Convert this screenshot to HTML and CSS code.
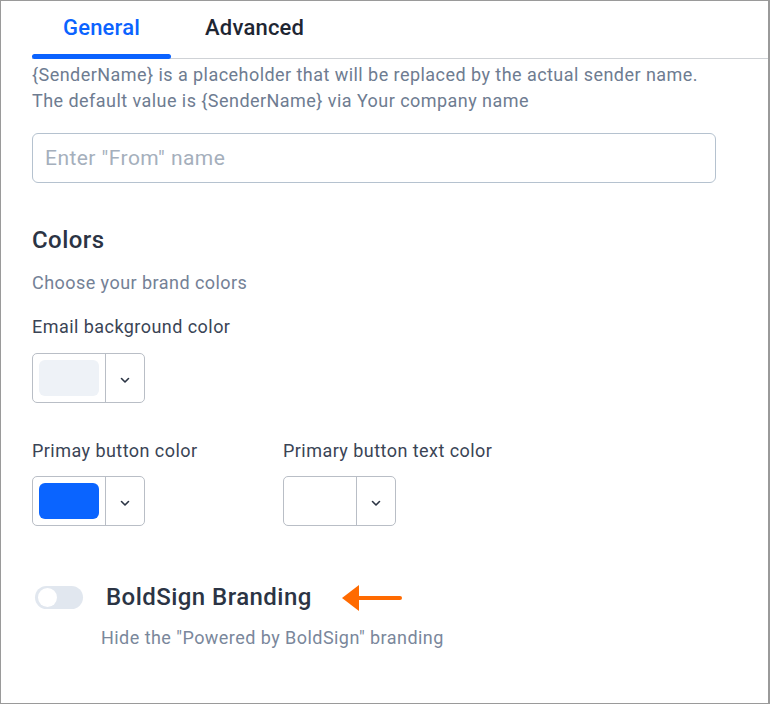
FILE: index.html
```html
<!DOCTYPE html>
<html>
<head>
<meta charset="utf-8">
<link rel="stylesheet" href="styles.css">
</head>
<body>
<div class="frame">
  <div class="tabs">
    <div class="tab active">General</div>
    <div class="tab">Advanced</div>
  </div>
  <div class="content">
    <p class="hint">{SenderName} is a placeholder that will be replaced by the actual sender name.<br>The default value is {SenderName} via Your company name</p>
    <input class="text-input" type="text" placeholder="Enter &quot;From&quot; name">

    <h2 class="section-title">Colors</h2>
    <p class="sub">Choose your brand colors</p>

    <div class="field">
      <label class="label">Email background color</label>
      <div class="picker">
        <div class="swatch-wrap"><div class="swatch swatch-light"></div></div>
        <div class="drop"><svg width="12" height="8" viewBox="0 0 12 8"><path d="M2.5 2.5 L6 6 L9.5 2.5" fill="none" stroke="#2b3444" stroke-width="1.6" stroke-linecap="round" stroke-linejoin="round"/></svg></div>
      </div>
    </div>

    <div class="row">
      <div class="field col">
        <label class="label">Primay button color</label>
        <div class="picker">
          <div class="swatch-wrap"><div class="swatch swatch-blue"></div></div>
          <div class="drop"><svg width="12" height="8" viewBox="0 0 12 8"><path d="M2.5 2.5 L6 6 L9.5 2.5" fill="none" stroke="#2b3444" stroke-width="1.6" stroke-linecap="round" stroke-linejoin="round"/></svg></div>
        </div>
      </div>
      <div class="field col">
        <label class="label">Primary button text color</label>
        <div class="picker">
          <div class="swatch-wrap"><div class="swatch swatch-white"></div></div>
          <div class="drop"><svg width="12" height="8" viewBox="0 0 12 8"><path d="M2.5 2.5 L6 6 L9.5 2.5" fill="none" stroke="#2b3444" stroke-width="1.6" stroke-linecap="round" stroke-linejoin="round"/></svg></div>
        </div>
      </div>
    </div>

    <div class="branding">
      <div class="toggle"><div class="knob"></div></div>
      <span class="branding-title">BoldSign Branding</span>
      <svg class="arrow" width="62" height="32" viewBox="0 0 62 32"><path d="M14 16 H59" stroke="#ff6a00" stroke-width="4" stroke-linecap="round"/><path d="M1 16 L18 3 L18 29 Z" fill="#ff6a00"/></svg>
    </div>
    <p class="branding-desc">Hide the "Powered by BoldSign" branding</p>
  </div>
</div>
</body>
</html>
```

FILE: styles.css
```css
* { box-sizing: border-box; }
html, body { margin: 0; padding: 0; background: #fff; }
body { font-family: Roboto, "Liberation Sans", sans-serif; }

.frame {
  width: 770px;
  height: 704px;
  border: 1px solid #9a9a9a;
  border-right-width: 2px;
  overflow: hidden;
}

.tabs {
  display: flex;
  margin-left: 31px;
  height: 58px;
  border-bottom: 1px solid #cfd2d6;
}
.tab {
  position: relative;
  padding: 14px 31px 0 31px;
  font-size: 22px;
  font-weight: 500;
  color: #1e2633;
  letter-spacing: 0.2px;
}
.tab + .tab { padding-left: 34px; }
.tab.active { color: #0b63ff; }
.tab.active::after {
  content: "";
  position: absolute;
  left: 0; right: 0; bottom: -1px;
  height: 5px;
  border-radius: 3px;
  background: #0b63ff;
}

.content { padding: 0 0 0 31px; }

.hint {
  margin: 3px 0 0;
  font-size: 18px;
  line-height: 26px;
  color: #6e7c91;
  letter-spacing: 0.45px;
}

.text-input {
  display: block;
  margin-top: 19px;
  width: 684px;
  height: 50px;
  border: 1px solid #b5c2cf;
  border-radius: 6px;
  padding: 0 12px;
  font-family: Roboto, "Liberation Sans", sans-serif;
  font-size: 21px;
  letter-spacing: 0.45px;
  color: #333;
  outline: none;
}
.text-input::placeholder { color: #a5afbc; }

.section-title {
  margin: 43px 0 0;
  font-size: 24px;
  line-height: 28px;
  font-weight: 500;
  color: #2b3444;
  letter-spacing: 0.45px;
}
.sub {
  margin: 18px 0 0;
  font-size: 18px;
  line-height: 22px;
  color: #748196;
  letter-spacing: 0.45px;
}

.field { display: flex; flex-direction: column; }
.label {
  display: block;
  font-size: 18px;
  line-height: 22px;
  color: #3a4455;
  letter-spacing: 0.45px;
}
.content > .field { margin-top: 22px; }
.content > .field .label { margin-bottom: 15px; }

.picker {
  display: flex;
  width: 113px;
  height: 50px;
  border: 1px solid #b9bec6;
  border-radius: 5px;
}
.swatch-wrap {
  width: 73px;
  padding: 6px;
  border-right: 1px solid #b9bec6;
}
.swatch {
  width: 60px;
  height: 36px;
  border-radius: 6px;
}
.swatch-light { background: #eef2f7; }
.swatch-blue { background: #0a64ff; }
.swatch-white { background: #fff; }
.drop {
  flex: 1;
  display: flex;
  align-items: center;
  justify-content: center;
  padding-top: 4px;
}

.row { display: flex; margin-top: 37px; }
.row .col { width: 251px; }
.row .label { margin-bottom: 14px; }

.branding {
  display: flex;
  align-items: center;
  margin-top: 57px;
  padding-left: 3px;
  height: 28px;
}
.toggle {
  position: relative;
  width: 48px;
  height: 23px;
  border-radius: 12px;
  background: #e1e7ef;
}
.knob {
  position: absolute;
  left: 3px; top: 2px;
  width: 19px; height: 19px;
  border-radius: 50%;
  background: #fff;
}
.branding-title {
  margin-left: 23px;
  font-size: 24px;
  font-weight: 500;
  color: #2b3444;
  letter-spacing: 0.45px;
}
.arrow { margin-left: 29px; margin-top: 2px; }

.branding-desc {
  margin: 16px 0 0 69px;
  font-size: 18px;
  line-height: 22px;
  color: #7a879b;
  letter-spacing: 0.45px;
}
```
